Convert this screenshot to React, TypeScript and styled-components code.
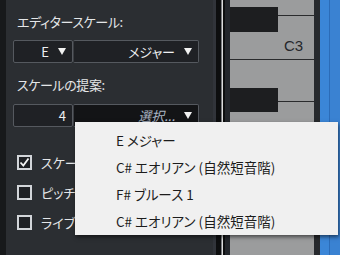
import * as React from 'react';
import styled, {createGlobalStyle} from 'styled-components';

const GlobalStyle = createGlobalStyle`
    html, body {
        margin: 0;
        padding: 0;
        background: #2b2e32;
    }
    body {
        font-family: "Noto Sans CJK JP", "Noto Sans", sans-serif;
        font-feature-settings: "palt";
    }
`;

const Screen = styled.div`
    position: relative;
    display: flex;
    width: 340px;
    height: 255px;
    overflow: hidden;
    background: #2b2e32;
`;

const Stripe = styled.div<{$w: number; $c: string}>`
    flex: 0 0 ${p => p.$w}px;
    background: ${p => p.$c};
`;

const Panel = styled.div`
    flex: 0 0 207px;
    box-sizing: border-box;
    padding: 12px 14px 0 7px;
    display: flex;
    flex-direction: column;
    background: #2b2e32;
    color: #e4e6e8;
    font-size: 13px;
`;

const Label = styled.div<{$top?: number}>`
    height: 20px;
    line-height: 20px;
    margin-top: ${p => p.$top || 0}px;
    padding-left: 4px;
    letter-spacing: -0.4px;
`;

const FieldRow = styled.div<{$top: number}>`
    display: flex;
    height: 23px;
    margin-top: ${p => p.$top}px;
`;

const Field = styled.div<{$w?: number; $dark?: boolean}>`
    box-sizing: border-box;
    ${p => (p.$w ? `flex: 0 0 ${p.$w}px;` : 'flex: 1;')}
    display: flex;
    align-items: center;
    justify-content: flex-end;
    gap: 9px;
    padding: 0 6px;
    border: 1px solid #55595f;
    border-radius: 2px;
    background: ${p => (p.$dark ? '#131416' : '#1f2125')};
    color: #eef0f2;
    font-size: 13px;
    & + & {
        border-left-color: #3a3d42;
    }
`;

const Hint = styled.span`
    color: #a9b3c2;
    font-style: italic;
`;

const Arrow = styled.span`
    width: 0;
    height: 0;
    border-left: 4.5px solid transparent;
    border-right: 4.5px solid transparent;
    border-top: 7px solid #f2f2f2;
`;

const Checks = styled.div`
    display: flex;
    flex-direction: column;
    gap: 15px;
    margin-top: 28px;
    padding-left: 4px;
`;

const CheckRow = styled.div`
    display: flex;
    align-items: center;
    gap: 9px;
    height: 15px;
    white-space: nowrap;
`;

const CheckText = styled.span`
    max-width: 34px;
    overflow: hidden;
`;

const Box = styled.div`
    box-sizing: border-box;
    width: 15px;
    height: 15px;
    border: 2px solid #d2d5d9;
    background: #1e2024;
    display: flex;
    align-items: center;
    justify-content: center;
`;

const Divider = styled.div`
    flex: 0 0 17px;
    display: flex;
`;

const Piano = styled.svg`
    flex: 0 0 84px;
    display: block;
`;

const Track = styled.div`
    flex: 0 0 20px;
    display: flex;
    background: #3b86d7;
`;

const Menu = styled.div`
    position: absolute;
    left: 75px;
    top: 122px;
    width: 263px;
    height: 113px;
    box-sizing: border-box;
    padding-top: 4px;
    background: #f0f0f0;
    box-shadow: 1px 2px 4px rgba(0, 0, 0, 0.55);
    color: #1c1c1c;
    font-size: 13.5px;
`;

const MenuItem = styled.div`
    height: 27px;
    line-height: 28px;
    padding-left: 41px;
    white-space: nowrap;
`;

function Check({checked, label}: {checked?: boolean; label: string}) {
    return (
        <CheckRow>
            <Box>
                {checked && (
                    <svg width="11" height="11" viewBox="0 0 11 11">
                        <path d="M1.5 5.5 L4.3 8.5 L9.5 1.5" fill="none" stroke="#f4f4f4" strokeWidth="1.8"/>
                    </svg>
                )}
            </Box>
            <CheckText>{label}</CheckText>
        </CheckRow>
    );
}

function PianoKeys() {
    return (
        <Piano width="84" height="255" viewBox="0 0 84 255">
            <rect width="84" height="255" fill="#9b9c9d"/>
            <rect x="0" y="7" width="48" height="25" fill="#1d1e20"/>
            <rect x="0" y="88" width="48" height="24" fill="#1d1e20"/>
            <rect x="0" y="169" width="48" height="25" fill="#1d1e20"/>
            <line x1="48" y1="15.5" x2="84" y2="15.5" stroke="#2a2b2d"/>
            <line x1="0" y1="59.5" x2="84" y2="59.5" stroke="#2a2b2d"/>
            <line x1="48" y1="101.5" x2="84" y2="101.5" stroke="#2a2b2d"/>
            <line x1="0" y1="141.5" x2="84" y2="141.5" stroke="#2a2b2d"/>
            <text x="54" y="51" fontSize="15" fill="#25272b" fontFamily="'Liberation Sans', sans-serif">C3</text>
        </Piano>
    );
}

export default function App() {
    return (
        <Screen>
            <GlobalStyle/>
            <Stripe $w={6} $c="#17191b"/>
            <Panel>
                <Label>エディタースケール:</Label>
                <FieldRow $top={8}>
                    <Field $w={60}>E<Arrow/></Field>
                    <Field>メジャー<Arrow/></Field>
                </FieldRow>
                <Label $top={12}>スケールの提案:</Label>
                <FieldRow $top={9}>
                    <Field $w={60}>4</Field>
                    <Field $dark><Hint>選択...</Hint><Arrow/></Field>
                </FieldRow>
                <Checks>
                    <Check checked label="スケールアシスト"/>
                    <Check label="ピッチ補正"/>
                    <Check label="ライブアシスト"/>
                </Checks>
            </Panel>
            <Divider>
                <Stripe $w={3} $c="#31343a"/>
                <Stripe $w={5} $c="#0d0e0f"/>
                <Stripe $w={1} $c="#7a7c80"/>
                <Stripe $w={1} $c="#dcdcdc"/>
                <Stripe $w={2} $c="#0d0e0f"/>
                <Stripe $w={5} $c="#23262b"/>
            </Divider>
            <PianoKeys/>
            <Stripe $w={6} $c="#26292d"/>
            <Track>
                <Stripe $w={9} $c="#3b86d7"/>
                <Stripe $w={1} $c="#2b6cb8"/>
                <Stripe $w={10} $c="#3a82d2"/>
            </Track>
            <Menu>
                <MenuItem>E メジャー</MenuItem>
                <MenuItem>C# エオリアン (自然短音階)</MenuItem>
                <MenuItem>F# ブルース 1</MenuItem>
                <MenuItem>C# エオリアン (自然短音階)</MenuItem>
            </Menu>
        </Screen>
    );
}
